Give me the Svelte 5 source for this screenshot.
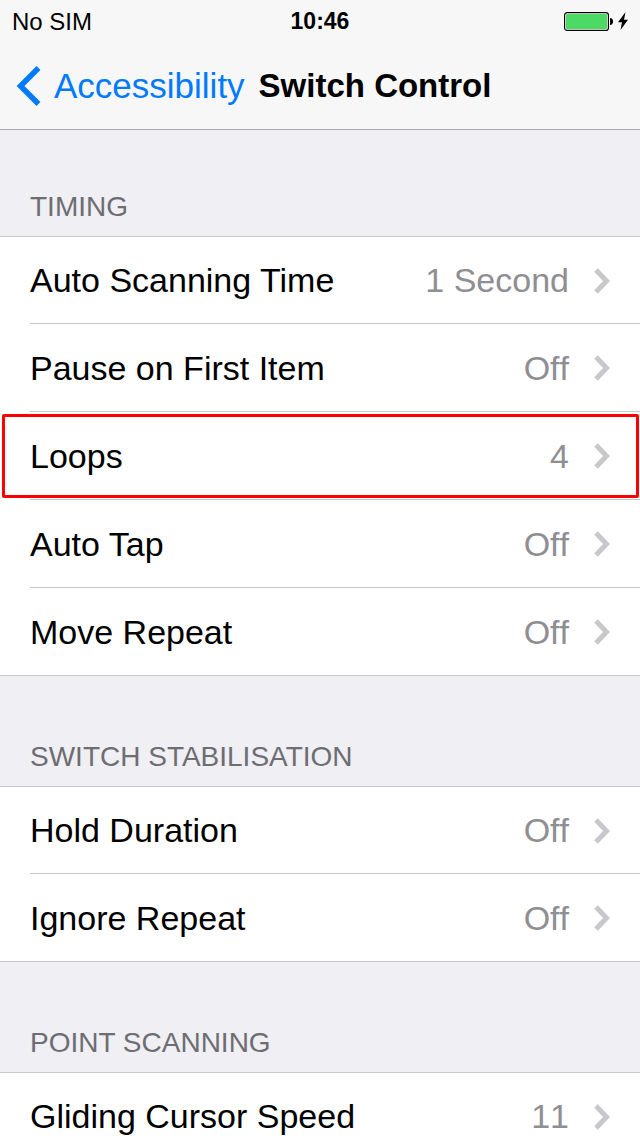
<script>
  const sections = [
    {
      title: 'TIMING',
      rows: [
        { label: 'Auto Scanning Time', value: '1 Second' },
        { label: 'Pause on First Item', value: 'Off' },
        { label: 'Loops', value: '4', highlighted: true },
        { label: 'Auto Tap', value: 'Off' },
        { label: 'Move Repeat', value: 'Off' }
      ]
    },
    {
      title: 'SWITCH STABILISATION',
      rows: [
        { label: 'Hold Duration', value: 'Off' },
        { label: 'Ignore Repeat', value: 'Off' }
      ]
    },
    {
      title: 'POINT SCANNING',
      rows: [{ label: 'Gliding Cursor Speed', value: '11' }]
    }
  ]
</script>

<div class="screen">
  <header>
    <div class="status">
      <span>No SIM</span>
      <span class="time">10:46</span>
      <svg class="battery" width="64" height="25" viewBox="0 0 64 25" aria-hidden="true">
        <rect x="0.6" y="3.6" width="43.8" height="17.8" rx="2.5" fill="#fff" stroke="#000" stroke-width="1.2" />
        <rect x="2" y="5" width="41" height="15" rx="1" fill="#4cd964" />
        <path d="M46 9c2 0 3 1.5 3 3.5s-1 3.5-3 3.5z" />
        <path d="M61.5 3L54 13.2h4L56.5 21 64 10.8h-4z" />
      </svg>
    </div>
    <nav>
      <a class="back" href="#accessibility">
        <svg width="26" height="42" viewBox="0 0 26 42" aria-hidden="true">
          <path d="M22.5 3L4.5 21l18 18" fill="none" stroke="#007aff" stroke-width="5.5" />
        </svg>
        Accessibility
      </a>
      <h1>Switch Control</h1>
    </nav>
  </header>

  <main>
    {#each sections as section}
      <section>
        <h2>{section.title}</h2>
        <ul>
          {#each section.rows as row}
            <li>
              <button class="row" class:highlighted={row.highlighted}>
                <span class="label">{row.label}</span>
                <span class="value">{row.value}</span>
                <svg width="18" height="28" viewBox="0 0 18 28" aria-hidden="true">
                  <path d="M2 3l10.5 11L2 25" fill="none" stroke="#c7c7cc" stroke-width="5" />
                </svg>
              </button>
            </li>
          {/each}
        </ul>
      </section>
    {/each}
  </main>
</div>

<style>
  :global(body) {
    background: #efeff4;
  }

  .screen {
    display: flex;
    flex-direction: column;
    height: 100vh;
    font-family: 'Liberation Sans', Arial, sans-serif;
    color: #000;
  }

  header {
    background: #f7f7f7;
    border-bottom: 1px solid #a9a9ac;
  }

  main {
    flex: 1;
    min-height: 0;
    overflow-y: auto;
    scrollbar-width: none;
  }

  .status {
    display: grid;
    grid-template-columns: 1fr auto 1fr;
    align-items: center;
    height: 43px;
    padding: 0 12px;
    font-size: 24px;
  }

  .time {
    font-size: 23px;
    font-weight: bold;
  }

  .battery {
    justify-self: end;
  }

  nav {
    display: flex;
    align-items: center;
    gap: 14px;
    height: 86px;
    padding: 0 16px;
  }

  .back {
    display: flex;
    align-items: center;
    gap: 12px;
    color: #007aff;
    font-size: 35px;
    text-decoration: none;
  }

  h1 {
    margin: 0;
    font-size: 33px;
  }

  section + section {
    padding-top: 4px;
  }

  h2 {
    margin: 0;
    padding: 61px 30px 13px;
    color: #6d6d72;
    font-size: 28px;
    font-weight: normal;
    line-height: 32px;
  }

  ul {
    margin: 0;
    padding: 0;
    list-style: none;
    background: #fff;
    border-top: 1px solid #c8c7cc;
    border-bottom: 1px solid #c8c7cc;
  }

  li + li::before {
    content: '';
    display: block;
    height: 1px;
    margin-left: 30px;
    background: #c8c7cc;
  }

  .row {
    position: relative;
    display: flex;
    align-items: center;
    width: 100%;
    height: 87px;
    padding: 1px 28px 0 30px;
    border: 0;
    background: none;
    color: inherit;
    font: inherit;
    font-size: 34px;
    text-align: left;
  }

  li:first-child .row {
    height: 86px;
  }

  .highlighted::after {
    content: '';
    position: absolute;
    inset: 2px 1px 1px 2px;
    border: 3px solid #f00;
    border-radius: 2px;
  }

  .label {
    flex: 1;
  }

  .value {
    margin-right: 25px;
    color: #8e8e93;
    font-kerning: none;
  }
</style>
